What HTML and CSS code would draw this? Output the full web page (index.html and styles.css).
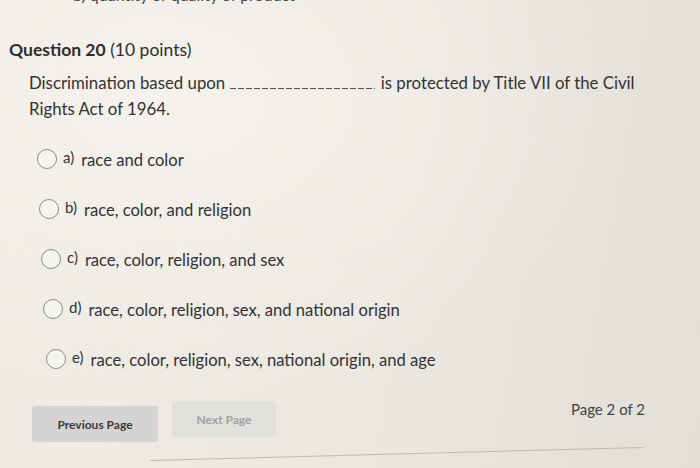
FILE: index.html
```html
<!DOCTYPE html>
<html lang="en">
<head>
<meta charset="utf-8">
<title>Question 20</title>
<link rel="stylesheet" href="styles.css">
</head>
<body>
<div class="page">
  <div class="prev-cut">b) quantity or quality of product</div>

  <section class="question">
    <h2 class="q-title"><strong>Question 20</strong> (10 points)</h2>
    <p class="stem">Discrimination based upon <span class="blank"></span> is protected by Title VII of the Civil<br>Rights Act of 1964.</p>

    <ul class="options">
      <li class="option opt-a"><span class="radio"></span><span class="letter">a)</span><span class="answer">race and color</span></li>
      <li class="option opt-b"><span class="radio"></span><span class="letter">b)</span><span class="answer">race, color, and religion</span></li>
      <li class="option opt-c"><span class="radio"></span><span class="letter">c)</span><span class="answer">race, color, religion, and sex</span></li>
      <li class="option opt-d"><span class="radio"></span><span class="letter">d)</span><span class="answer">race, color, religion, sex, and national origin</span></li>
      <li class="option opt-e"><span class="radio"></span><span class="letter">e)</span><span class="answer">race, color, religion, sex, national origin, and age</span></li>
    </ul>
  </section>

  <div class="pager">
    <button class="btn btn-prev">Previous Page</button>
    <button class="btn btn-next">Next Page</button>
    <span class="page-count">Page 2 of 2</span>
  </div>
  <div class="rule"></div>
</div>
</body>
</html>
```

FILE: styles.css
```css
html, body {
  margin: 0;
  padding: 0;
  height: 100%;
}

body {
  width: 700px;
  height: 468px;
  overflow: hidden;
  font-family: Lato, "Open Sans", "Liberation Sans", sans-serif;
  color: #333;
  background:
    radial-gradient(ellipse at 25% 20%, rgba(246, 243, 238, 0.9) 0%, rgba(246, 243, 238, 0) 60%),
    linear-gradient(100deg, #efebe5 0%, #ebe7e1 55%, #e2ded8 100%);
}

.page {
  height: 468px;
}

.prev-cut {
  font-size: 16px;
  line-height: 20px;
  margin-top: -15px;
  padding-left: 73px;
  color: #444;
}

.question {
  padding-left: 9px;
}

.q-title {
  margin: 34px 0 0;
  font-size: 17.5px;
  line-height: 22px;
  font-weight: 400;
  color: #2e2e2e;
}

.q-title strong {
  font-weight: 700;
}

.stem {
  margin: 9px 0 0 20px;
  font-size: 16.8px;
  line-height: 26px;
  color: #333;
}

.blank {
  display: inline-block;
  width: 145px;
  height: 12px;
  vertical-align: baseline;
  background: repeating-linear-gradient(to right, #555 0 6px, transparent 6px 8px) bottom / 100% 1px no-repeat;
  margin: 0 1px;
}

.options {
  list-style: none;
  margin: 12px 0 0;
  padding: 0;
}

.option {
  display: flex;
  align-items: center;
  height: 50px;
  font-size: 16.6px;
}

.opt-a { padding-left: 28px; }
.opt-b { padding-left: 30px; }
.opt-c { padding-left: 32px; }
.opt-d { padding-left: 34px; }
.opt-e { padding-left: 37px; }

.radio {
  flex: none;
  width: 18px;
  height: 18px;
  border: 1px solid #8c8c8c;
  border-radius: 50%;
  background: #f6f4f1;
}

.letter {
  margin-left: 6px;
  font-size: 15px;
  margin-bottom: 5px;
  color: #333;
}

.answer {
  margin-left: 7px;
  margin-top: 2px;
  color: #333;
}

.pager {
  display: flex;
  align-items: flex-start;
  margin-top: 22px;
  padding: 0 55px 0 32px;
}

.btn {
  font-family: inherit;
  font-weight: 700;
  font-size: 12px;
  border: none;
  border-radius: 3px;
  padding: 0;
}

.btn-prev {
  width: 126px;
  height: 36px;
  background: #d5d4d3;
  color: #3a3a3a;
}

.btn-next {
  margin-left: 14px;
  margin-top: -5px;
  width: 104px;
  height: 36px;
  background: #e2e0dd;
  color: #a3a19e;
}

.page-count {
  margin-left: auto;
  margin-top: -7px;
  font-size: 15px;
  line-height: 20px;
  color: #444;
}

.rule {
  margin: 5px 57px 0 150px;
  height: 1px;
  background: #bdb9b3;
  transform: rotate(-1.5deg);
  transform-origin: right center;
}
```
